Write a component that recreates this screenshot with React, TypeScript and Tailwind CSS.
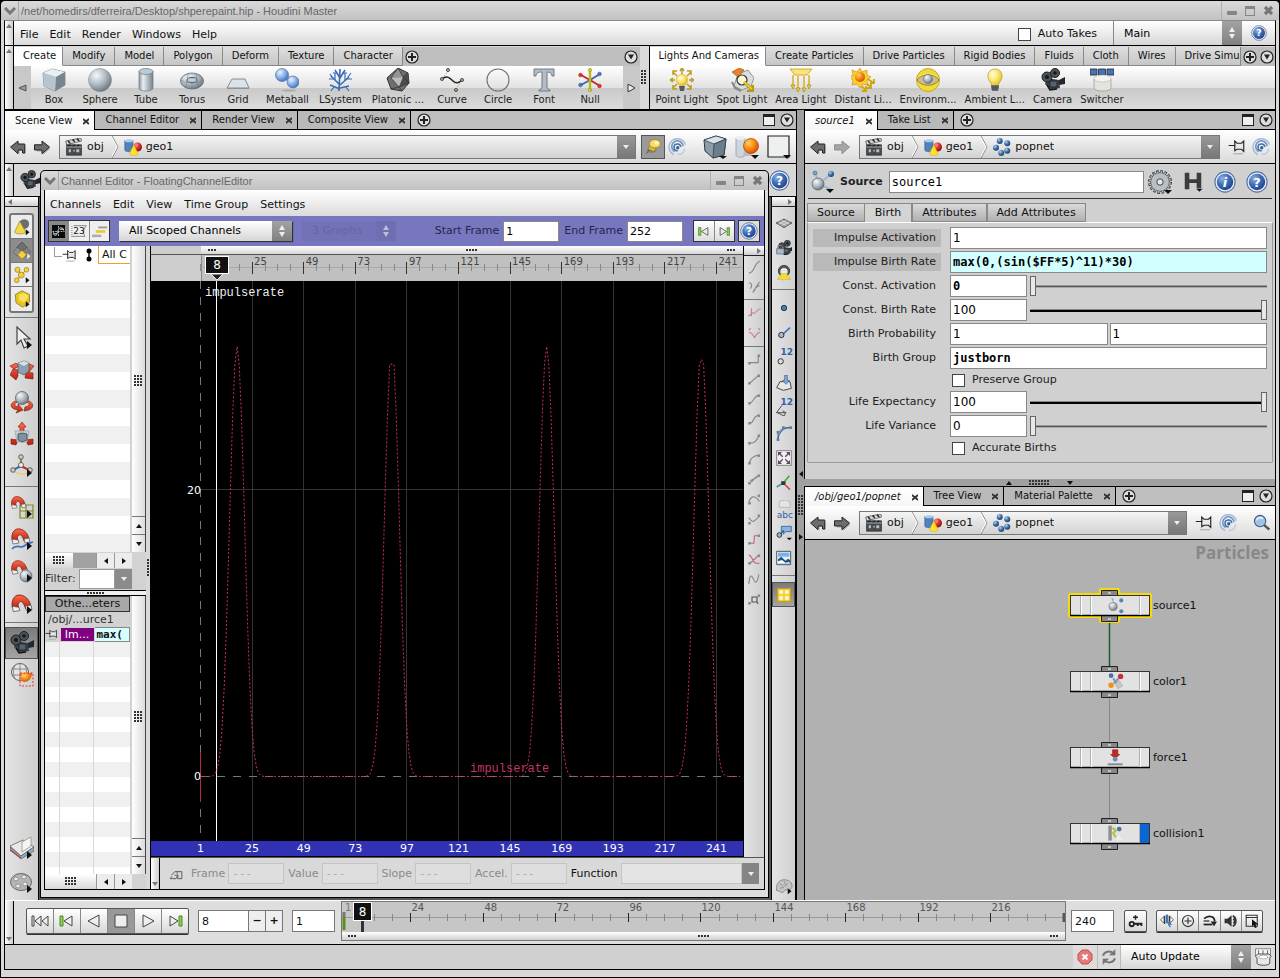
import type { ReactNode } from "react";

const dot = (x: number, y: number, r: number, fill: string, stroke = "#333") => (
  <circle cx={x} cy={y} r={r} fill={fill} stroke={stroke} strokeWidth={0.7} />
);

const corner = <path d="M17 15v8l5-4z" fill="#111" />;
const cornerDown = <path d="M16 19h8l-4 4z" fill="#111" />;
const magnet = (
  <>
    <path d="M2 13C1 5 5 1 10 2s8 5 9 10l-5 2c-1-4-3-7-5-6s-2 3-1 6z" fill="url(#red)" stroke="#7a1d0c" strokeWidth={0.8} />
    <path d="M2 12l6 1 1 3-6 1zM14 12l5-1 1 4-5 1z" fill="#eee" stroke="#555" strokeWidth={0.7} />
  </>
);
const camera = (
  <>
    <path d="M6 10l12 2 1 8-9 2-6-6z" fill="#3b4147" />
    <circle cx="6" cy="9" r="5" fill="#4a5157" stroke="#1c2023" />
    <circle cx="14" cy="5" r="4.5" fill="#4a5157" stroke="#1c2023" />
    <circle cx="6" cy="9" r="2" fill="#15181a" />
    <circle cx="14" cy="5" r="1.8" fill="#15181a" />
    <path d="M18 12l6-3v7l-6 1z" fill="#23282c" />
    <path d="M9 13h7v6H9z" fill="#59626a" stroke="#1c2023" strokeWidth={0.8} />
    <path d="M6 17l3 5 7-1" stroke="#15181a" fill="none" strokeWidth={1.5} />
  </>
);
const key = (
  <>
    <path d="M12 9V2M8 5h8" stroke="#222" strokeWidth={2.4} />
    <circle cx="6" cy="16" r="3.5" fill="none" stroke="#222" strokeWidth={3} />
    <path d="M9 14h14v5h-3v-2h-3v2h-3v-2H9" fill="#222" />
  </>
);

const ICONS: Record<string, ReactNode> = {
  box: (
    <>
      <path d="M1 5l9-4 13 3v13l-10 6L2 18z" fill="#9aabb7" stroke="#6c7780" strokeWidth={0.7} />
      <path d="M1 5l9-4 13 3-9 5z" fill="#e9eff3" />
      <path d="M14 9l9-5v13l-10 6z" fill="#77858f" />
      <path d="M1 5l13 4-1 14-11-5z" fill="#b7c5cf" />
    </>
  ),
  sphere: <circle cx="12" cy="12" r="11.5" fill="url(#steelBall)" stroke="#7d8890" strokeWidth={0.5} />,
  tube: (
    <>
      <path d="M5 3v17c0 4 14 4 14 0V3" fill="url(#steelBar)" stroke="#6e7a84" strokeWidth={0.7} />
      <ellipse cx="12" cy="3.5" rx="7" ry="3" fill="#b9cbd7" stroke="#6e7a84" strokeWidth={0.7} />
    </>
  ),
  torus: (
    <>
      <ellipse cx="12" cy="13" rx="11.5" ry="8" fill="url(#steelBall)" stroke="#5f6c77" strokeWidth={0.8} />
      <ellipse cx="12" cy="12" rx="5" ry="2.5" fill="#c4ccd3" stroke="#4a555e" />
      <path d="M1 12c5 4 17 4 22 0M8 6l-2 13M16 6l2 13M12 15v6" stroke="#74828e" strokeWidth={0.6} fill="none" />
    </>
  ),
  grid: (
    <>
      <path d="M6 11h13l4 9H1z" fill="#dbe2e8" stroke="#6b7680" strokeWidth={0.8} />
      <path d="M1 20h22v1H1z" fill="#8a949c" />
    </>
  ),
  metaball: (
    <>
      <ellipse cx="14" cy="22.5" rx="7" ry="1" fill="#aaa" />
      <path d="M8 7l10 7" stroke="#8fb3e6" strokeWidth={5} />
      <circle cx="7" cy="7" r="6.5" fill="url(#blueBall)" stroke="#4a72ab" strokeWidth={0.7} />
      <circle cx="18" cy="14" r="6" fill="url(#blueBall)" stroke="#4a72ab" strokeWidth={0.7} />
    </>
  ),
  lsystem: (
    <g stroke="#3a6cb5" fill="none" strokeWidth={1.6}>
      <path d="M11 23l1-22M12 17L3 8M12 17l9-8M12 10L7 2M12 10l5-8M12 21l-10-4M12 20l9-2" />
      <path d="M6 11H1M7 12V5M17 12V5M18 11h6M9 5H5M14 5h5M6 19l-3 4M18 19l3 4M4 9l-2-3M20 9l3-4" strokeWidth={1.2} />
    </g>
  ),
  platonic: (
    <>
      <path d="M12 0l10 5 1 10-7 8-11-2L1 10z" fill="#6d6f70" stroke="#2e3031" />
      <path d="M12 0l5 9-12 1z" fill="#939596" />
      <path d="M5 10l12-1-4 10z" fill="#b9bbbc" />
      <path d="M17 9l5-4 1 10-10 4z" fill="#4b4d4e" />
      <path d="M12 0l5 9 6 6-10 4-8-9zM13 19l3 4M13 19l-8 2M17 9l5-4" fill="none" stroke="#2e3031" strokeWidth={0.7} />
    </>
  ),
  curve: (
    <>
      <path d="M2 11L8 3M16 22l6-11" stroke="#e6b36a" strokeDasharray="2 1" />
      <path d="M2 11c5-4 8-1 11 2s6 2 9-1" stroke="#222" strokeWidth={1.5} fill="none" />
      {dot(8, 2, 1.6, "#999")}
      {dot(2, 11, 1.6, "#999")}
      {dot(16, 22, 1.6, "#999")}
      {dot(22, 12, 1.6, "#999")}
    </>
  ),
  circle: <circle cx="12" cy="12" r="11" fill="none" stroke="#6b7177" strokeWidth={1.1} />,
  font: (
    <path d="M2 1h20v7h-2c0-3-2-4-5-4v15c0 2 1 2 3 3v1H7v-1c2-1 3-1 3-3V4C6 4 4 5 4 8H2z" fill="#b3bdc8" stroke="#66717c" strokeWidth={0.9} />
  ),
  null: (
    <>
      <path d="M12 12L3 17M12 12l10-6" stroke="#3f66a5" strokeWidth={2} />
      <path d="M12 12L3 7M12 12l10 6" stroke="#c62828" strokeWidth={2} />
      <path d="M12 1v22" stroke="#b6ba1d" strokeWidth={2.4} />
      {dot(2.5, 7, 1.8, "#d33", "#c62828")}
      {dot(21.5, 18, 1.8, "#d33", "#c62828")}
      {dot(2.5, 17, 1.8, "#4f77b5", "#3f66a5")}
      {dot(21.5, 6, 1.8, "#4f77b5", "#3f66a5")}
      {dot(12, 2, 1.6, "#d2d52f", "#999c18")}
      {dot(12, 22, 1.6, "#d2d52f", "#999c18")}
    </>
  ),
  pointLight: (
    <>
      <g stroke="#b79a12" strokeWidth={1.4} fill="none">
        <path d="M12 6V1M7 8L3 4M17 8l4-4M5 12H0M19 12h5M7 16l-4 4M17 16l4 4" />
        <path d="M10 3l2-3 2 3M3 7V3h4M17 3h4v4M3 10l-3 2 3 2M21 10l3 2-3 2M3 17v4h4M17 21h4v-4" />
      </g>
      <circle cx="12" cy="12" r="5.5" fill="url(#yellowBall)" stroke="#c9a619" strokeWidth={0.6} />
      <path d="M9 18h6l-1 5h-4z" fill="#555b60" />
    </>
  ),
  spotLight: (
    <>
      <path d="M8 6l10-4 6 8-3 8-9 4-8-4z" fill="#d9dde0" stroke="#7b8084" strokeWidth={0.8} />
      <path d="M2 4l7-4 5 2-6 7z" fill="#e8822a" stroke="#8d4b12" strokeWidth={0.6} />
      <circle cx="12" cy="12" r="5" fill="#fff6d2" stroke="#333" strokeWidth={1.2} />
      <path d="M14 14l8 7M23 17v6h-6" stroke="#b79a12" strokeWidth={3} fill="none" />
      <path d="M14 14l8 7" stroke="#f2d43c" strokeWidth={1.5} />
      <path d="M2 14l3 6 6 3" stroke="#888" fill="none" strokeWidth={2} />
    </>
  ),
  areaLight: (
    <>
      <path d="M1 1h22l-5 6H6z" fill="#fae37b" stroke="#c49d17" strokeWidth={0.8} />
      <path d="M4 7v11M9 8v14M15 8v14M20 7v11" stroke="#d5b322" strokeWidth={1.5} />
      <path d="M2 17h4l-2 4zM7 20h4l-2 4zM13 20h4l-2 4zM18 17h4l-2 4z" fill="#f2d43c" stroke="#a8880d" strokeWidth={0.7} />
    </>
  ),
  distantLight: (
    <>
      <path d="M15 10l8 5M13 14l7 5M9 17l6 5M23 11v4h-4M20 15v5h-4M15 18v5h-4" stroke="#c9a713" strokeWidth={1.8} fill="none" />
      <path d="M9 0l2 4 5-2v5l4 2-4 3 1 5-5-1-3 4-3-4-5 1 1-5-4-3 4-2-1-5 5 2z" fill="#f8cf2e" stroke="#c9860c" strokeWidth={0.6} />
      <circle cx="9" cy="9" r="5" fill="url(#orangeBall)" />
    </>
  ),
  environment: (
    <>
      <circle cx="12" cy="12" r="11.5" fill="#f3d936" stroke="#b89c17" strokeWidth={0.8} />
      <path d="M2 11c3-7 17-7 20 0-4-3-16-3-20 0z" fill="#fff4a6" />
      <path d="M1 12c5-7 17-7 22 0-5 7-17 7-22 0z" fill="#c9c08e" stroke="#84712a" strokeWidth={0.8} />
      <circle cx="12" cy="11" r="4.5" fill="url(#steelBall)" stroke="#5a646d" strokeWidth={0.6} />
    </>
  ),
  ambient: (
    <>
      <path d="M8 15C3 10 4 1 12 1s9 9 4 14l-1 3H9z" fill="url(#yellowBall)" stroke="#b7a142" strokeWidth={0.8} />
      <path d="M8 17h8l-1 6H9z" fill="#6c7277" />
      <path d="M8 19h8M8.5 21h7" stroke="#333" strokeWidth={0.8} />
    </>
  ),
  camera,
  switcher: (
    <>
      <path d="M0 1h7v6H0zM8.500 1h7v6h-7zM17 1h7v6h-7z" fill="#4773b3" stroke="#27374d" strokeWidth={0.9} />
      <path d="M4 11v9c0 4 17 4 17 0v-9" fill="#e4e4de" stroke="#98988f" strokeWidth={0.7} />
      <ellipse cx="12.5" cy="10.5" rx="8.5" ry="3.5" fill="#f5f5f0" stroke="#b3b3aa" strokeWidth={0.6} />
    </>
  ),
  back: (
    <>
      <path d="M5 14l9-8v4h8v11h-3v-4h-5v4z" fill="#aaa" />
      <path d="M2 12l10-8v4h9v12h-3v-4h-6v5z" fill="#6b6e6b" stroke="#222" strokeWidth={1.3} />
    </>
  ),
  forward: (
    <>
      <path d="M23 14l-9-8v4H5v8h9v4z" fill="#aaa" />
      <path d="M22 12L12 4v5H2v7h10v5z" fill="#6b6e6b" stroke="#222" strokeWidth={1.3} />
    </>
  ),
  forwardOff: <path d="M22 12L12 4v5H2v7h10v5z" fill="#a5a5a5" stroke="#888" strokeWidth={1.2} />,
  clapper: (
    <>
      <path d="M2 9h20v14H2z" fill="#454b4e" stroke="#222" strokeWidth={0.8} />
      <path d="M1 4l20-4 1 4L2 9z" fill="#ddd" stroke="#222" strokeWidth={0.8} />
      <path d="M4 4l3 3M10 2l3 3M16 1l3 3M4 12l3-3M10 12l3-3M16 12l3-3" stroke="#222" strokeWidth={2} />
      <path d="M2 12h20" stroke="#ccc" />
      <path d="M5 15h3v4H5zM11 16h2v2h-2zM15 15h4v4h-4z" fill="#b7bcc0" />
    </>
  ),
  geo: (
    <>
      <path d="M1 3v13c0 3 11 3 11 0V3" fill="#4e82bf" stroke="#2e5585" strokeWidth={0.7} />
      <ellipse cx="6.5" cy="3.5" rx="5.5" ry="2" fill="#a9cbe9" />
      <circle cx="18" cy="12" r="6" fill="url(#redBall)" />
      <path d="M13 9l6 12c-2 3-10 3-12 0z" fill="#ffe02e" stroke="#c89f12" strokeWidth={0.6} />
    </>
  ),
  popnet: (
    <g fill="url(#navyBall)">
      <circle cx="9" cy="4" r="4" />
      <circle cx="19" cy="7" r="4" />
      <circle cx="4" cy="13" r="4" />
      <circle cx="11" cy="20" r="4" />
      <circle cx="19" cy="17" r="4" />
    </g>
  ),
  pinYellow: (
    <>
      <ellipse cx="9" cy="18" rx="7" ry="3" fill="#777" opacity={0.6} />
      <path d="M8 8l8 8-4 3-8-3z" fill="#d9b531" stroke="#7f6611" strokeWidth={0.8} />
      <ellipse cx="14" cy="8" rx="8" ry="6" fill="#f4dc69" stroke="#8b7115" strokeWidth={0.9} />
      <ellipse cx="16" cy="7" rx="3" ry="2.5" fill="#fff5bd" />
      <path d="M6 17l-4 5" stroke="#555" strokeWidth={1.4} />
    </>
  ),
  rings: (
    <g fill="none" strokeWidth={2}>
      <path d="M8 22A11 11 0 1 1 23 9" stroke="#a3bad8" />
      <path d="M9 18A7.500 7.500 0 1 1 20 11" stroke="#6f93c3" />
      <path d="M13 17a4.500 4.500 0 1 1 4-5" stroke="#416fae" />
      <circle cx="13" cy="13" r="2.2" fill="#2d5fa5" stroke="none" />
      <path d="M13 22c6 0 9-4 9-8" stroke="#b9c9de" />
    </g>
  ),
  cube: (
    <>
      <path d="M1 5l12-4 10 3-2 16-11 3-8-7z" fill="#8b9dab" stroke="#2d363d" />
      <path d="M1 5l12-4 10 3-12 5z" fill="#d9e2e8" stroke="#2d363d" strokeWidth={0.7} />
      <path d="M11 9l12-5-2 16-11 3z" fill="#6d7e8b" stroke="#2d363d" strokeWidth={0.7} />
      <path d="M16 21h8l-4 3z" fill="#111" />
    </>
  ),
  display: (
    <>
      <path d="M1 3v17c0 3 9 3 9 0V3" fill="#ccd6de" stroke="#8a949d" strokeWidth={0.7} />
      <ellipse cx="5.5" cy="3" rx="4.5" ry="2" fill="#e9eff3" />
      <path d="M12 4l5 17H8z" fill="#b8bcc0" />
      <circle cx="16" cy="11" r="7.5" fill="url(#orangeBall)" stroke="#b34a05" strokeWidth={0.8} />
      <path d="M16 20h8l-4 4z" fill="#111" />
    </>
  ),
  square: (
    <>
      <path d="M1 1h21v21H1z" fill="#eef0ef" stroke="#222" strokeWidth={1.2} />
      <path d="M16 20h8l-4 4z" fill="#111" />
    </>
  ),
  pin: (
    <>
      <path d="M1 10h9M9 4v13l3-2h6l3 3V4l-3 3h-6l-3-3z" fill="#e9e9e9" stroke="#222" strokeWidth={1.5} />
      <path d="M7 21h13" stroke="#aaa" strokeWidth={1.5} />
    </>
  ),
  search: (
    <>
      <path d="M15 15l8 7" stroke="#555" strokeWidth={3.5} />
      <circle cx="10" cy="10" r="8" fill="#9cc3ea" stroke="#4a5d77" strokeWidth={1.6} />
      <path d="M5 9c1-4 6-5 9-2" stroke="#e8f3fd" strokeWidth={2} fill="none" />
    </>
  ),
  source: (
    <>
      <path d="M8 14L4 2M8 14L20 4M8 14l13 6" stroke="#9db9d4" strokeWidth={2} />
      <circle cx="7" cy="14" r="6" fill="url(#steelBall)" stroke="#4f5a64" strokeWidth={0.7} />
      <circle cx="20" cy="4" r="3" fill="url(#navyBall)" />
      <circle cx="4" cy="3" r="2" fill="#7aa3cc" stroke="#41658a" strokeWidth={0.6} />
      <path d="M15 19h8l-4 4z" fill="#111" />
    </>
  ),
  gear: (
    <>
      <circle cx="12" cy="12" r="10" fill="none" stroke="#3c4247" strokeWidth={4} strokeDasharray="2.4 1.527" />
      <circle cx="12" cy="12" r="9.4" fill="#b8c0c6" stroke="#4d555b" />
      <circle cx="12" cy="12" r="10" fill="none" stroke="#b8c0c6" strokeWidth={2} strokeDasharray="1.2 2.727" strokeDashoffset={-0.6} />
      <circle cx="12" cy="12" r="3.2" fill="#e3e7ea" stroke="#444" />
      <path d="M16 20h8l-4 4z" fill="#111" />
    </>
  ),
  hda: (
    <>
      <path d="M3 2h5v7h8V2h5v18h-5v-7H8v7H3z" fill="#3a3c3e" />
      <path d="M15 19h8l-4 4z" fill="#111" stroke="#ddd" strokeWidth={0.6} />
    </>
  ),
  shapes: (
    <>
      <circle cx="15" cy="8" r="6.5" fill="#6a6e72" />
      <path d="M9 4l8 15c-3 3-12 3-15 0z" fill="#f6d74a" stroke="#927513" strokeWidth={0.8} />
      {corner}
    </>
  ),
  diamonds: (
    <>
      <path d="M12 0l7 7-7 7-7-7z" fill="#6f6f6f" stroke="#333" strokeWidth={0.7} />
      <path d="M6 7l6 6-6 6-6-6z" fill="#8f8f8f" stroke="#444" strokeWidth={0.6} />
      <path d="M18 7l6 6-6 6-6-6z" fill="#7f7f7f" stroke="#444" strokeWidth={0.6} />
      <path d="M12 11l6 6-6 6-6-6z" fill="#f6cf3d" stroke="#8a6c0d" strokeWidth={0.8} />
      <path d="M19 15v8l4-4z" fill="#eee" />
    </>
  ),
  particles: (
    <>
      <path d="M6 5l5 7M18 5l-7 7M5 19l6-7" stroke="#8b7113" />
      <g fill="#f2d03a" stroke="#8b7113" strokeWidth={0.8}>
        <circle cx="6" cy="5" r="3.5" />
        <circle cx="18" cy="5" r="3.2" />
        <circle cx="11" cy="12" r="4" />
        <circle cx="5" cy="19" r="3.2" />
      </g>
      {corner}
    </>
  ),
  solid: (
    <>
      <path d="M3 6l9-5 10 5v10l-9 7-9-6z" fill="#e8c421" stroke="#7f670c" strokeWidth={0.9} />
      <path d="M8 6l7-2 6 4-6 9-7-4z" fill="#f8e25e" />
      {corner}
    </>
  ),
  arrow: (
    <>
      <path d="M7 1v17l4-4 3 8 4-2-4-7h6z" fill="#eee" stroke="#444" strokeWidth={1.2} />
      {corner}
    </>
  ),
  move: (
    <>
      <path d="M0 17l3-6 5 1v6l-2 4zM24 8l-7-3-2 5 4 4zM0 8l6-3 3 3-5 3zM23 21l-8-1 1-6 7 1z" fill="url(#red)" stroke="#7b130b" strokeWidth={0.6} />
      <path d="M8 5l6-2 5 2v8l-5 4-6-3z" fill="#8ca0ae" stroke="#4e5d68" strokeWidth={0.8} />
      <path d="M8 5l6-2 5 2-5 3z" fill="#d5dfe6" />
    </>
  ),
  rotate: (
    <>
      <path d="M5 11c-6 3-5 8 3 9l-2 3 7-3-5-6v3c-4-1-4-3-1-5zM19 11c6 3 5 9-5 10l1-4c5-1 5-3 2-5z" fill="url(#red)" stroke="#7b2a0b" strokeWidth={0.7} />
      <circle cx="12" cy="8" r="6.5" fill="url(#steelBall)" stroke="#56616a" strokeWidth={0.8} />
    </>
  ),
  scale: (
    <>
      <path d="M12 0l4 5h-2v5h-4V5H8zM1 17l7 1-2 5-5-1zM23 17l-7 1 2 5 5-1z" fill="url(#red)" stroke="#7b130b" strokeWidth={0.6} />
      <path d="M5 9h14l-2 11H7z" fill="#c6ced4" stroke="#9aa3aa" strokeWidth={0.7} />
      <path d="M8 12l4-1 5 1v6l-5 2-4-2z" fill="#7f919f" stroke="#3e4a53" strokeWidth={0.8} />
    </>
  ),
  handle: (
    <>
      <path d="M11 12V4" stroke="#6d9f2f" strokeWidth={2} />
      <path d="M11 12l-8 4" stroke="#4470b5" strokeWidth={2} />
      <path d="M11 12l10 5" stroke="#c7301e" strokeWidth={2} />
      <path d="M3 17c6 4 12 4 18 0" stroke="#e8ce50" strokeWidth={1.5} fill="none" />
      {dot(11, 3, 2.3, "#ccc")}
      {dot(3, 16, 2.3, "#ccc")}
      {dot(20, 16, 2.3, "#ccc")}
      {dot(11, 11, 2.5, "#eee")}
      {corner}
    </>
  ),
  snapGrid: (
    <>
      <path d="M10 10h13v13H10zM16 10v13M10 16h13" fill="none" stroke="#7d8a1c" strokeWidth={1.2} />
      <g transform="scale(.8)">{magnet}</g>
      {corner}
    </>
  ),
  snapCurve: (
    <>
      {magnet}
      <path d="M2 22c5-6 8 0 12-3s6-3 9-4" stroke="#3c74b9" strokeWidth={1.8} fill="none" />
      {corner}
    </>
  ),
  snapPoint: (
    <>
      <g transform="scale(.9)">{magnet}</g>
      <circle cx="16" cy="17" r="6" fill="url(#steelBall)" stroke="#666" strokeWidth={0.7} />
      {corner}
    </>
  ),
  snap: (
    <>
      <g transform="translate(0 2) scale(1.1)">{magnet}</g>
      {corner}
    </>
  ),
  renderRegion: (
    <>
      <circle cx="10" cy="9" r="8.5" fill="#e4e4e4" stroke="#555" strokeWidth={0.9} />
      <path d="M2 6h16M2 12h16M10 0v18M5 2c-2 5-2 9 0 14M15 2c2 5 2 9 0 14" stroke="#777" strokeWidth={0.8} fill="none" />
      <path d="M10 10h12c0 6-4 9-8 9-3-1-4-4-4-9z" fill="url(#orangeBall)" />
      <path d="M10 10h13v13H10z" fill="none" stroke="#d33" strokeDasharray="2 1.5" />
    </>
  ),
  book: (
    <>
      <path d="M0 10l13-6 11 7-13 9z" fill="#e8e8e4" stroke="#666" strokeWidth={0.8} />
      <path d="M0 11l11 9 13-9v4l-13 8L1 14z" fill="#8fb0c4" stroke="#556" strokeWidth={0.7} />
      <path d="M12 6l9-5v9l-9 6z" fill="#f5f5f2" stroke="#888" strokeWidth={0.7} />
      <path d="M0 14l11 8" stroke="#b3402e" strokeWidth={1.4} />
      {corner}
    </>
  ),
  reel: (
    <>
      <ellipse cx="11" cy="12" rx="10.5" ry="8.5" fill="#b5b5b3" stroke="#666" />
      <g fill="#eee" stroke="#777" strokeWidth={0.7}>
        <ellipse cx="6" cy="9" rx="2.3" ry="1.9" />
        <ellipse cx="14" cy="7" rx="2.3" ry="1.9" />
        <ellipse cx="8" cy="16" rx="2.3" ry="1.9" />
        <ellipse cx="15" cy="14" rx="2.3" ry="1.9" />
      </g>
      {corner}
    </>
  ),
  plane: (
    <>
      <path d="M0 12l12-6 12 6-12 7z" fill="#999" stroke="#333" />
      <path d="M4 10l12 6M8 8l12 6M4 14l12-6M8 16l12-6" stroke="#eee" />
    </>
  ),
  cameraLock: (
    <>
      <g transform="translate(3 0)">{camera}</g>
      <path d="M3 13v-2c0-4 7-4 7 0v2" fill="none" stroke="#777" strokeWidth={2} />
      <path d="M1 13h11v8H1z" fill="#a9bbcb" stroke="#51606e" />
    </>
  ),
  headlight: (
    <>
      <circle cx="12" cy="9" r="8.5" fill="#54585b" stroke="#222" />
      <circle cx="12" cy="10" r="5.5" fill="#e8e8e4" />
      <path d="M8 13h8l6 9-6-1-4 2-4-2-6 1z" fill="#f4db35" stroke="#c7a512" strokeWidth={0.7} />
    </>
  ),
  point: <circle cx="12" cy="12" r="4" fill="#4f7cab" stroke="#22384f" strokeWidth={1.5} />,
  normals: (
    <>
      <path d="M9 15L21 4" stroke="#3a72ba" strokeWidth={2.5} />
      <circle cx="8" cy="15" r="4" fill="#a8bccd" stroke="#333" strokeWidth={1.5} />
    </>
  ),
  pointNumbers: <circle cx="7" cy="17" r="4" fill="#ddd" stroke="#333" strokeWidth={1.5} />,
  primNormal: (
    <>
      <path d="M6 10l15 0 2 10-12 3-10-4z" fill="#e8e8e8" stroke="#333" strokeWidth={1.3} />
      <path d="M13 0h4v8h3l-5 6-5-6h3z" fill="#88a9cf" stroke="#315f99" />
    </>
  ),
  primNumbers: <path d="M0 20L9 8M2 19h12l-4-3M2 19l10 5 3-6" fill="none" stroke="#444" strokeWidth={1.4} />,
  hull: (
    <>
      <path d="M3 22C3 12 10 4 22 4" stroke="#4a76ad" strokeWidth={2} fill="none" />
      <path d="M3 22V11l8-7h11" stroke="#444" fill="none" />
      <path d="M1 9h4v4H1zM9 2h4v4H9zM20 2h4v4h-4zM1 20h4v4H1z" fill="#5d7fa8" />
    </>
  ),
  expand: (
    <>
      <path d="M1 1h22v22H1z" fill="#f2eef2" stroke="#555" />
      <path d="M3 3h6L3 9zM21 3v6l-6-6zM3 21v-6l6 6zM21 21h-6l6-6z" fill="#5c4566" />
      <path d="M5 5l5 5M19 5l-5 5M5 19l5-5M19 19l-5-5" stroke="#5c4566" strokeWidth={2} />
    </>
  ),
  axes: (
    <>
      <path d="M11 12L1 18" stroke="#3f9bb5" strokeWidth={2.5} />
      <path d="M11 12l9-11" stroke="#4cab35" strokeWidth={2.5} />
      <path d="M11 12l10 10" stroke="#e0434f" strokeWidth={2.5} />
      <path d="M8 9l7 1-2 5-5 0z" fill="#333" />
    </>
  ),
  labels: <path d="M5 2l9-2 7 3v8H5z" fill="#e6e4dc" stroke="#aaa" />,
  comment: (
    <>
      <path d="M8 2h15v8H14l-3 4v-4H8z" fill="#88b4e2" stroke="#2e6094" strokeWidth={1.2} />
      <circle cx="5" cy="15" r="3.5" fill="#9fb3c6" stroke="#333" strokeWidth={1.4} />
      <path d="M7 13l5-5" stroke="#2e6094" strokeWidth={2} />
      {cornerDown}
    </>
  ),
  image: (
    <>
      <path d="M1 2h21v20H1z" fill="#e4eefa" stroke="#345" strokeWidth={1.3} />
      <path d="M3 4h17v6H3z" fill="#7fb0e6" />
      <path d="M3 20v-6l5-4 6 6 4-3 3 2v5z" fill="#23517e" />
      <path d="M3 20v-3l6-2 5 4 6-1v2z" fill="#fff" />
    </>
  ),
  quad: (
    <>
      <path d="M0 0h24v24H0z" fill="#d89c12" />
      <path d="M3 3h8v8H3zM13 3h8v8h-8zM3 13h8v8H3zM13 13h8v8h-8z" fill="#fffbe0" stroke="#f5d43a" strokeWidth={2} />
    </>
  ),
  brain: (
    <>
      <path d="M2 14C2 6 10 1 18 5c6 3 6 9 2 12l-6 0-4 4-4-2-4-1z" fill="#c5c5c5" stroke="#777" />
      <path d="M6 9l5 3M12 5l2 6M17 8l-4 5M6 15l6-1" stroke="#888" fill="none" />
      {corner}
    </>
  ),
  graphView: (
    <>
      <path d="M0 0h24v24H0z" fill="#0a0a0a" />
      <path d="M1 12h22M12 2v20" stroke="#eee" strokeWidth={1.5} strokeDasharray="3 2" />
      <path d="M2 13c3 9 6 8 8 0s8-12 12-3" stroke="#68a0e0" strokeWidth={2} fill="none" />
      <path d="M2 16h8M15 8h7" stroke="#e7c93a" strokeWidth={2} />
    </>
  ),
  dopesheet: (
    <>
      <path d="M1 20h20c-4-5-2-12 2-16H4" fill="#f2f2f2" stroke="#888" strokeWidth={1.5} />
      <path d="M1 5v18" stroke="#999" strokeWidth={3} strokeDasharray="1 2" />
    </>
  ),
  bars: (
    <>
      <path d="M10 4h14v3H10z" fill="#999" />
      <path d="M6 10h15v4H6z" fill="#efc51e" />
      <path d="M0 17h15v4H0z" fill="#aaa" />
    </>
  ),
  scrub: (
    <>
      <path d="M1 10l6-6v12zM23 10l-6-6v12z" fill="#fff" stroke="#333" strokeWidth={1.3} />
      <path d="M8 3v14M16 3v11" stroke="#333" strokeWidth={2} />
      <path d="M10 1h4v15h-4z" fill="#3f74b8" />
      <path d="M14 13l7 5-4 1 2 4-3-1-2-3z" fill="#3f74b8" />
    </>
  ),
  clock: (
    <>
      <circle cx="12" cy="12" r="9.5" fill="none" stroke="#333" strokeWidth={2} />
      <path d="M12 6v11M6 12h12" stroke="#333" strokeWidth={2} fill="none" />
    </>
  ),
  loop: (
    <>
      <path d="M2 8c3-3 6-4 9-4 6 0 9 4 9 9" fill="none" stroke="#222" strokeWidth={3} />
      <path d="M13 13h11l-5 8z" fill="#222" />
      <path d="M1 18h15" stroke="#222" strokeWidth={3} />
      <path d="M1 12h10" stroke="#222" strokeWidth={2} fill="none" />
    </>
  ),
  speaker: (
    <>
      <path d="M1 8h5l7-6v20l-7-6H1z" fill="#333" />
      <path d="M15 3c7 3 7 15 0 18M16 8c3 2 3 6 0 8" fill="none" stroke="#333" strokeWidth={3} />
    </>
  ),
  panel: (
    <>
      <path d="M2 2h19v19H2zM2 6h19" fill="none" stroke="#333" strokeWidth={1.8} />
      <path d="M12 9v13l3-3 2 5 3-1-2-5h5z" fill="#111" />
    </>
  ),
  key,
  refresh: (
    <g fill="none" stroke="#777" strokeWidth={3}>
      <path d="M3 10c2-7 11-8 16-3" />
      <path d="M21 14c-2 7-11 8-16 3" />
      <path d="M21 1v8h-8zM3 23v-8h8z" fill="#777" strokeWidth={1} />
    </g>
  ),
  cache: (
    <>
      <path d="M2 1h20v10H2z" fill="#f5f5f0" stroke="#666" />
      <path d="M6 3v5M12 3v5M18 3v5" stroke="#777" strokeWidth={1.5} />
      <path d="M4 13v7c0 4 17 4 17 0v-7l2-2-3-3H5l-3 3z" fill="#e9e9e2" stroke="#444" strokeWidth={1.2} />
      <ellipse cx="12.5" cy="12" rx="6" ry="2.5" fill="#fff" stroke="#888" strokeWidth={0.8} />
    </>
  ),
  editKey: (
    <>
      <path d="M4 14l6-6h12v12h-7v-6l-3 6H2l3-4" fill="none" stroke="#555" strokeWidth={1.6} />
      <path d="M14 8v5M9 14h7" stroke="#555" strokeWidth={1.3} />
    </>
  ),
  nodeSource: (
    <>
      <circle cx="9" cy="14" r="6" fill="url(#steelBall)" stroke="#667" strokeWidth={0.8} />
      <circle cx="21" cy="5" r="3" fill="#5a83b3" />
      <circle cx="21" cy="21" r="3" fill="#5a83b3" />
      <path d="M6 1l4 2-1 5z" fill="#86aac9" />
    </>
  ),
  nodeColor: (
    <>
      <circle cx="6" cy="4" r="3.5" fill="#4a72a8" />
      <circle cx="20" cy="5" r="4" fill="#cc2f35" />
      <circle cx="6" cy="18" r="4" fill="#ef8f1c" />
      <path d="M9 8l6 8M17 8l-7 7" stroke="#7b99c7" strokeWidth={3} />
      <path d="M12 16l6-5 5 8-7 4z" fill="#ccc8c0" stroke="#999" strokeWidth={0.7} />
    </>
  ),
  nodeForce: (
    <>
      <path d="M8 1h8v7h3l-7 6-7-6h3z" fill="#c3261f" stroke="#7a120e" strokeWidth={0.7} />
      <circle cx="12" cy="15" r="3.5" fill="#6690c0" />
      <path d="M1 21h22v3H1z" fill="#8b8f92" />
    </>
  ),
  nodeCollision: (
    <>
      <path d="M2 1h5v22H2z" fill="#8d9092" />
      <circle cx="18" cy="6" r="3.5" fill="#4a72a8" />
      <path d="M8 4l5 4-4 4 4 6" stroke="#b5c336" strokeWidth={3} fill="none" />
      <path d="M12 22l5-8 6 8z" fill="#eee" />
    </>
  ),
};

function Icon({ name, size = 24 }: { name: string; size?: number }) {
  return (
    <svg width={size} height={size} viewBox="0 0 24 24" className="shrink-0" aria-hidden="true">
      {ICONS[name]}
    </svg>
  );
}

function Defs() {
  const ball = (id: string, a: string, b: string, c: string) => (
    <radialGradient id={id} cx="35%" cy="30%" r="75%">
      <stop offset="0" stopColor={a} />
      <stop offset=".5" stopColor={b} />
      <stop offset="1" stopColor={c} />
    </radialGradient>
  );
  return (
    <svg className="absolute size-0" aria-hidden="true">
      <defs>
        {ball("steelBall", "#f6f8f9", "#b4bec6", "#68747e")}
        {ball("blueBall", "#eaf3fe", "#8fb5ea", "#3e6fb8")}
        {ball("navyBall", "#b9d4ee", "#3f6ea6", "#1c3f6b")}
        {ball("redBall", "#ff9c85", "#d9302a", "#86120e")}
        {ball("orangeBall", "#ffd56b", "#f98b12", "#cf4c06")}
        {ball("yellowBall", "#fffde0", "#fbe86a", "#e0b91f")}
        {ball("helpBall", "#8fb4e8", "#3f6fb8", "#1d438a")}
        <linearGradient id="steelBar">
          <stop offset="0" stopColor="#8a99a5" />
          <stop offset=".3" stopColor="#e8eef2" />
          <stop offset="1" stopColor="#73818d" />
        </linearGradient>
        <linearGradient id="red" x1="0" y1="0" x2="0" y2="1">
          <stop offset="0" stopColor="#ff6b4a" />
          <stop offset="1" stopColor="#b81f12" />
        </linearGradient>
      </defs>
    </svg>
  );
}

function HelpButton({ size = 22, glyph = "?", label = "Help" }: { size?: number; glyph?: string; label?: string }) {
  return (
    <button aria-label={label} className="shrink-0">
      <svg width={size} height={size} viewBox="0 0 24 24" className="block">
        <circle cx="12" cy="12" r="11" fill="#f1f1f1" stroke="#5473a5" strokeWidth={1.2} />
        <circle cx="12" cy="12" r="9" fill="url(#helpBall)" />
        <text x="12" y="17" textAnchor="middle" fontSize="14" fontWeight="bold" fill="#fff" fontStyle={glyph === "i" ? "italic" : "normal"}>
          {glyph}
        </text>
      </svg>
    </button>
  );
}

function Grip({ cols, rows }: { cols: number; rows: number }) {
  return (
    <svg width={cols * 3} height={rows * 3} className="shrink-0" aria-hidden="true">
      {Array.from({ length: cols * rows }, (_, i) => (
        <rect key={i} x={(i % cols) * 3} y={Math.floor(i / cols) * 3} width="2" height="2" fill="#333" />
      ))}
    </svg>
  );
}

const TRI = {
  up: "M0 5h6L3 1z",
  down: "M0 1h6L3 5z",
  left: "M5 0v6L1 3z",
  right: "M1 0v6l4-3z",
};

function Tri({ dir, color = "#111" }: { dir: keyof typeof TRI; color?: string }) {
  return (
    <svg width="6" height="6" className="shrink-0" aria-hidden="true">
      <path d={TRI[dir]} fill={color} />
    </svg>
  );
}

function Gutter({ down = false }: { down?: boolean }) {
  return (
    <div className={`flex w-[9px] shrink-0 justify-center border-r border-black bg-linear-to-r from-white to-[#cfcfcf] py-[2px] ${down ? "items-end" : "items-start"}`}>
      <Tri dir={down ? "down" : "up"} color="#777" />
    </div>
  );
}

function Collapser({ left = false }: { left?: boolean }) {
  return (
    <div className={`flex h-[10px] shrink-0 items-center border-b border-[#222] bg-linear-to-b from-white to-[#d0d0d0] px-[2px] ${left ? "justify-start" : "justify-end"}`}>
      <Tri dir={left ? "left" : "right"} color="#777" />
    </div>
  );
}

function RoundButton({ kind }: { kind: "plus" | "menu" }) {
  return (
    <button aria-label={kind === "plus" ? "Add tab" : "Tab menu"} className="shrink-0">
      <svg width="14" height="14" viewBox="0 0 14 14" className="block">
        <circle cx="7" cy="7" r="6" fill="#dedede" stroke="#222" strokeWidth={1.2} />
        {kind === "plus" ? <path d="M7 3v8M3 7h8" stroke="#222" strokeWidth={2} /> : <path d="M4 4.500h6l-3 5z" fill="#222" />}
      </svg>
    </button>
  );
}

function MaxButton() {
  return (
    <button aria-label="Maximize pane" className="h-[12px] w-[12px] shrink-0 border border-t-[3px] border-[#222] bg-[#eee]" />
  );
}

function Spinner() {
  return (
    <svg width="6" height="12" viewBox="0 0 6 12" aria-hidden="true">
      <path d="M0 5h6L3 0zM0 7h6l-3 5z" fill="#eee" />
    </svg>
  );
}

function Select({ label, value, options, className }: { label: string; value: string; options: string[]; className: string }) {
  return (
    <div className={`relative flex ${className}`}>
      <select aria-label={label} defaultValue={value} className="min-w-0 flex-1 appearance-none bg-linear-to-b from-white to-[#d6d6d6] pl-[10px] text-[11px] text-black">
        {options.map((o) => (
          <option key={o}>{o}</option>
        ))}
      </select>
      <span className="pointer-events-none flex w-5 items-center justify-center bg-linear-to-b from-[#a3a3a3] to-[#808080]">
        <Spinner />
      </span>
    </div>
  );
}

function PaneTabs({ tabs }: { tabs: { name: string; italic?: boolean }[] }) {
  return (
    <div className="flex h-[20px] shrink-0 border-t border-black bg-[#bebebe]">
      {tabs.map((t, i) => (
        <div
          key={t.name}
          className={`flex shrink-0 items-center gap-[11px] border-r border-black pr-[5px] pl-[10px] ${i === 0 ? "bg-linear-to-b from-white to-[#f6f6f6]" : "border-b bg-[#b9b9b9]"}`}
        >
          <button className={`text-[10px] leading-3 whitespace-nowrap ${t.italic ? "italic" : ""}`}>{t.name}</button>
          <button aria-label={`Close ${t.name}`}>
            <svg width="6" height="7" viewBox="0 0 6 7" className="mt-px block">
              <path d="M0 1l6 5M6 1L0 6" stroke="#333" strokeWidth={1.8} />
            </svg>
          </button>
        </div>
      ))}
      <div className="flex flex-1 items-center gap-[5px] border-b border-black pr-[2px] pl-[6px]">
        <RoundButton kind="plus" />
        <span className="flex-1" />
        <MaxButton />
        <RoundButton kind="menu" />
      </div>
    </div>
  );
}

const CRUMB_ICONS: Record<string, string> = { obj: "clapper", geo1: "geo", popnet: "popnet" };

function Chevron() {
  return (
    <svg width="7" height="22" viewBox="0 0 7 22" className="ml-[8px]" aria-hidden="true">
      <path d="M0 0l6 11-6 11" fill="none" stroke="#888" />
      <path d="M-1 0l6 11-6 11" fill="none" stroke="#fff" />
    </svg>
  );
}

function PathBar({ path, forward = true, children }: { path: string[]; forward?: boolean; children: ReactNode }) {
  return (
    <div className="flex h-[34px] shrink-0 items-center border-b border-black bg-linear-to-b from-white to-[#dadada] pr-[5px] pl-[4px]">
      <button aria-label="Back">
        <Icon name="back" size={18} />
      </button>
      <button aria-label="Forward" className="ml-[6px]">
        <Icon name={forward ? "forward" : "forwardOff"} size={18} />
      </button>
      <nav className="ml-[8px] flex h-[24px] min-w-0 flex-1 border border-[#777] bg-linear-to-b from-[#f4f4f4] to-[#d2d2d2]">
        {path.map((p, i) => (
          <div key={p} className="flex items-center">
            <button className="flex items-center gap-[4px] pl-[5px] text-[11px]">
              <Icon name={CRUMB_ICONS[p]} size={18} />
              {p}
            </button>
            {i < path.length - 1 && <Chevron />}
          </div>
        ))}
        <span className="flex-1" />
        <button aria-label="Path history" className="flex w-[18px] items-center justify-center bg-linear-to-b from-[#999] to-[#777]">
          <Tri dir="down" color="#eee" />
        </button>
      </nav>
      {children}
    </div>
  );
}

function ShelfTabs({ tabs }: { tabs: string[] }) {
  return (
    <div className="flex h-[19px] shrink-0 bg-[#bebebe]">
      <div className="flex shrink-0">
        {tabs.map((t, i) => (
          <button
            key={t}
            className={`shrink-0 border-r border-b text-[10px] leading-4 whitespace-nowrap ${i === 0 ? "border-r-[#888] border-b-white bg-white pr-[6px] pl-[9px]" : "border-[#888] bg-linear-to-b from-[#dedede] to-[#c6c6c6] pl-[9px]"} ${i > 0 && t !== "Drive Simu" ? "pr-[9px]" : ""}`}
          >
            {t}
          </button>
        ))}
      </div>
      <div className="flex flex-1 items-center justify-between gap-[3px] pr-[2px] pl-[2px]">
        <RoundButton kind="plus" />
        <RoundButton kind="menu" />
      </div>
    </div>
  );
}

const SHELF_BG = "bg-[linear-gradient(to_bottom,#fff,#e2e2e2_50%,#c9c9c9_52%,#dcdcdc)]";

function ShelfTools({ tools, pad }: { tools: [string, string][]; pad: string }) {
  return (
    <>
      {tools.map(([icon, name]) => (
        <button key={name} className={`flex min-w-[46px] shrink-0 flex-col items-center gap-[2px] pt-[2px] text-[10px] leading-3 whitespace-nowrap text-[#222] ${pad}`}>
          <Icon name={icon} size={24} />
          {name}
        </button>
      ))}
    </>
  );
}

function TitleBar({ title }: { title: string }) {
  return (
    <div className="flex h-[19px] shrink-0 items-center rounded-t-[4px] bg-linear-to-b from-[#dadada] to-[#c2c2c2] pr-[5px] pl-[3px]">
      <svg width="12" height="8" aria-hidden="true">
        <path d="M1 1l5 5 5-5" fill="none" stroke="#777" strokeWidth={3} />
      </svg>
      <span className="ml-[2px] h-full w-px bg-[#aaa]" />
      <span className="ml-[2px] flex-1 truncate font-['Liberation_Sans'] text-[11px] leading-4 text-[#666]">{title}</span>
      <div className="flex h-full items-center gap-[8px] border-l border-[#b0b0b0] pl-[5px]">
        <button aria-label="Minimize" className="mt-[5px] h-[4px] w-[10px] rounded-[1px] bg-[#858585]" />
        <button aria-label="Restore" className="h-[10px] w-[10px] border border-t-[3px] border-[#858585]" />
        <button aria-label="Close">
          <svg width="11" height="11" className="block">
            <path d="M2 2l7 7M9 2l-7 7" stroke="#777" strokeWidth={3.2} />
          </svg>
        </button>
      </div>
    </div>
  );
}

function MenuBar() {
  return (
    <div className="flex h-[25px] shrink-0 border-b border-black bg-linear-to-b from-white to-[#dadada]">
      <Gutter />
      <div className="flex flex-1 items-center gap-[11px] pt-[4px] pl-[6px] text-[11px]">
        {["File", "Edit", "Render", "Windows", "Help"].map((m) => (
          <button key={m}>{m}</button>
        ))}
      </div>
      <label className="flex items-center gap-[7px] pt-[2px] pr-[16px] text-[11px]">
        <input type="checkbox" className="size-[13px] appearance-none border border-[#444] bg-white" />
        Auto Takes
      </label>
      <Select label="Take" value="Main" options={["Main"]} className="w-[129px] border-l border-[#888] [&>select]:pt-[2px]" />
      <div className="flex w-[33px] items-center justify-center">
        <HelpButton size={16} />
      </div>
    </div>
  );
}

const MODEL_TOOLS: [string, string][] = [
  ["box", "Box"],
  ["sphere", "Sphere"],
  ["tube", "Tube"],
  ["torus", "Torus"],
  ["grid", "Grid"],
  ["metaball", "Metaball"],
  ["lsystem", "LSystem"],
  ["platonic", "Platonic ..."],
  ["curve", "Curve"],
  ["circle", "Circle"],
  ["font", "Font"],
  ["null", "Null"],
];

const LIGHT_TOOLS: [string, string][] = [
  ["pointLight", "Point Light"],
  ["spotLight", "Spot Light"],
  ["areaLight", "Area Light"],
  ["distantLight", "Distant Li..."],
  ["environment", "Environm..."],
  ["ambient", "Ambient L..."],
  ["camera", "Camera"],
  ["switcher", "Switcher"],
];

function Shelves() {
  return (
    <div className="flex h-[64px] shrink-0 border-b border-black">
      <Gutter />
      <div className="flex min-w-0 flex-1 flex-col pt-px">
        <ShelfTabs tabs={["Create", "Modify", "Model", "Polygon", "Deform", "Texture", "Character"]} />
        <div className={`flex flex-1 ${SHELF_BG}`}>
          <button aria-label="Scroll left" className="flex w-[17px] items-center justify-center bg-[#c8c8c8]">
            <svg width="9" height="8" aria-hidden="true">
              <path d="M8 1v6L1 4z" fill="#999" stroke="#555" />
            </svg>
          </button>
          <ShelfTools tools={MODEL_TOOLS} pad="px-[5px]" />
          <span className="flex-1" />
          <button aria-label="Scroll right" className="flex w-[17px] items-center justify-center bg-[#c8c8c8]">
            <svg width="9" height="8" aria-hidden="true">
              <path d="M1 0v8l7-4z" fill="#eee" stroke="#333" />
            </svg>
          </button>
        </div>
      </div>
      <div className="flex w-[10px] shrink-0 items-center justify-center border-r border-black bg-[#dadada]">
        <Grip cols={2} rows={5} />
      </div>
      <div className="flex min-w-0 flex-1 flex-col pt-px">
        <ShelfTabs tabs={["Lights And Cameras", "Create Particles", "Drive Particles", "Rigid Bodies", "Fluids", "Cloth", "Wires", "Drive Simu"]} />
        <div className={`flex flex-1 pl-[2px] ${SHELF_BG}`}>
          <ShelfTools tools={LIGHT_TOOLS} pad="px-[4px]" />
        </div>
      </div>
    </div>
  );
}

function ToolButton({ name, size = 24, active = false, className = "h-8" }: { name: string; size?: number; active?: boolean; className?: string }) {
  return (
    <button
      aria-label={name}
      className={`flex w-full shrink-0 items-center justify-center ${className} ${active ? "border border-[#555] bg-linear-to-b from-[#7a7a7a] to-[#a5a5a5]" : ""}`}
    >
      <Icon name={name} size={size} />
    </button>
  );
}

function LeftTools() {
  return (
    <div className="flex w-[34px] shrink-0 flex-col border-r border-black bg-linear-to-r from-[#e4e4e4] to-[#cecece]">
      <Collapser left />
      <div className="mx-[4px] mt-[6px] flex flex-col divide-y divide-[#777] rounded-[3px] border-2 border-[#777] bg-[#ececec]">
        <ToolButton name="shapes" size={18} className="h-[24px]" />
        <button aria-label="Components" className="flex h-[24px] items-center justify-center bg-[#8c8c8c]">
          <Icon name="diamonds" size={18} />
        </button>
        <ToolButton name="particles" size={18} className="h-[24px]" />
        <ToolButton name="solid" size={18} className="h-[24px]" />
      </div>
      <div className="mt-[4px] border-t border-[#777] pt-[4px]">
        {["arrow", "move", "rotate", "scale", "handle"].map((n) => (
          <ToolButton key={n} name={n} />
        ))}
      </div>
      <div className="mt-[4px] border-t border-[#777] pt-[4px]">
        {["snapGrid", "snapCurve", "snapPoint", "snap"].map((n) => (
          <ToolButton key={n} name={n} />
        ))}
      </div>
      <div className="mt-[3px] border-t border-[#777] pt-[4px]">
        <ToolButton name="camera" active />
        <ToolButton name="renderRegion" />
      </div>
      <span className="flex-1" />
      <ToolButton name="book" />
      <ToolButton name="reel" className="h-[36px]" />
    </div>
  );
}

function TextTool({ name, text }: { name: string; text: string }) {
  return (
    <button aria-label={name} className="relative flex h-[25px] w-full shrink-0 items-center justify-center">
      <Icon name={name} size={16} />
      <span className={`absolute right-[2px] text-[9px] leading-[10px] text-[#2f62a8] ${text === "abc" ? "bottom-0" : "top-[2px] font-bold"}`}>{text}</span>
    </button>
  );
}

function RightTools() {
  const h = "h-[25px]";
  return (
    <div className="flex w-[25px] shrink-0 flex-col border-x border-black bg-linear-to-r from-[#e4e4e4] to-[#d0d0d0]">
      <Collapser />
      <div className="border-b border-[#777] pt-[3px] pb-[4px]">
        <ToolButton name="plane" size={16} className={h} />
        <ToolButton name="cameraLock" size={16} className={h} />
        <ToolButton name="headlight" size={16} className={h} />
      </div>
      <div className="border-b border-[#777] pt-[5px] pb-[5px]">
        <ToolButton name="point" size={16} className={h} />
        <ToolButton name="normals" size={16} className={h} />
        <TextTool name="pointNumbers" text="12" />
        <ToolButton name="primNormal" size={16} className={h} />
        <TextTool name="primNumbers" text="12" />
        <ToolButton name="hull" size={16} className={h} />
        <ToolButton name="expand" size={16} className={h} />
        <ToolButton name="axes" size={16} className={h} />
        <TextTool name="labels" text="abc" />
        <ToolButton name="comment" size={16} className={h} />
        <ToolButton name="image" size={16} className={h} />
      </div>
      <div className="pt-[6px]">
        <ToolButton name="quad" size={14} active className={h} />
      </div>
      <span className="flex-1" />
      <ToolButton name="brain" size={18} className="h-[28px]" />
    </div>
  );
}

/* Channel editor */

const FRAME_PX = 2.15;
const frameX = (f: number) => 49.5 + (f - 1) * FRAME_PX;
const valueY = (v: number) => 495.5 - v * 14.33;
const impulse = (f: number) => Math.max(0, Math.pow(Math.sin((f * 5 * Math.PI) / 180), 11) * 30);

const curvePoints = Array.from({ length: 252 }, (_, i) => i + 1)
  .filter((f) => f !== 90)
  .map((f) => `${frameX(f)},${valueY(f === 234 ? 29.1 : impulse(f))}`)
  .join(" ");

const MAJOR = [25, 49, 73, 97, 121, 145, 169, 193, 217, 241];
const MINOR = Array.from({ length: 42 }, (_, i) => 1 + i * 6);

function ChannelRuler() {
  return (
    <svg className="block h-[26px] w-full" viewBox="0 0 592 26" preserveAspectRatio="xMinYMin slice">
      <rect width="592" height="26" fill="#c0c0c0" />
      <rect width="50" height="26" fill="#cdcdcd" />
      <path d="M50.500 0v26" stroke="#888" />
      <path d="M50 12.500h542" stroke="#aaa" />
      {MINOR.map((f) => (
        <path key={f} d={`M${Math.floor(frameX(f)) + 0.5} 9v7`} stroke="#888" />
      ))}
      {MAJOR.map((f) => (
        <g key={f}>
          <path d={`M${Math.floor(frameX(f)) + 0.5} 7v12`} stroke="#333" />
          <text x={frameX(f) + 2} y="10" fontSize="10" fill="#444">
            {f}
          </text>
        </g>
      ))}
      <path d="M60 19h12l-6 6z" fill="#222" stroke="#eee" />
      <rect x="54.5" y="1.5" width="23" height="17" fill="#111" stroke="#fff" />
      <text x="66" y="14" fontSize="12" fill="#fff" textAnchor="middle">
        8
      </text>
    </svg>
  );
}

function ChannelGraph() {
  return (
    <svg className="block min-h-0 w-full flex-1 bg-black" viewBox="0 0 592 560" preserveAspectRatio="xMinYMin slice">
      <g stroke="#333">
        {MAJOR.map((f) => (
          <path key={f} d={`M${Math.floor(frameX(f)) + 0.5} 0v560`} />
        ))}
        <path d="M50 208.500h542" />
      </g>
      <path d="M49.500 0v560" stroke="#777" strokeDasharray="8 8" />
      <path d="M50 495.500h542" stroke="#777" strokeDasharray="8 8" />
      <path d="M65.500 0v560" stroke="#fff" />
      <polyline points={curvePoints} fill="none" stroke="#cc2f66" strokeDasharray="2 2" />
      <path d="M49.500 471v50" stroke="#b0245a" />
      <g fontSize="11" fill="#fff">
        <text x="36" y="213">20</text>
        <text x="43" y="499">0</text>
      </g>
      <g fontSize="12" fontFamily="'Liberation Mono', monospace">
        <text x="54" y="15" fill="#eee">impulserate</text>
        <text x="319" y="491" fill="#c0356a">impulserate</text>
      </g>
    </svg>
  );
}

function HBar({ wide = false, className = "" }: { wide?: boolean; className?: string }) {
  return (
    <div className={`flex h-[15px] shrink-0 ${className}`}>
      <div className={`flex items-center justify-center bg-linear-to-b from-white to-[#d8d8d8] ${wide ? "flex-1" : "w-[28px]"}`}>
        <Grip cols={4} rows={3} />
      </div>
      {!wide && <div className="flex-1 bg-[#a2a2a2]" />}
      {(["left", "right"] as const).map((dir) => (
        <button key={dir} aria-label={`Scroll ${dir}`} className="flex w-[18px] items-center justify-center border-l border-[#999] bg-[#ececec]">
          <Tri dir={dir} />
        </button>
      ))}
    </div>
  );
}

function VBar() {
  return (
    <div className="flex w-[14px] shrink-0 flex-col border-r border-[#444] bg-linear-to-r from-white to-[#dcdcdc]">
      <div className="flex flex-1 items-center justify-center">
        <Grip cols={3} rows={4} />
      </div>
      {(["up", "down"] as const).map((dir) => (
        <button key={dir} aria-label={`Scroll ${dir}`} className="flex h-[18px] items-center justify-center border-t border-[#777]">
          <Tri dir={dir} />
        </button>
      ))}
    </div>
  );
}

function ChannelList() {
  return (
    <div className="flex w-[101px] shrink-0 flex-col bg-[#d2d2d2]">
      <div className="flex h-[306px] shrink-0">
        <div className="mr-[2px] min-w-0 flex-1 bg-[repeating-linear-gradient(to_bottom,#f0f0f0_0_18px,#fff_18px_36px)]">
          <div className="flex h-[18px] items-center bg-white">
            <span className="mb-[7px] ml-[9px] h-[10px] w-[8px] border-b border-l border-[#999]" />
            <Icon name="pin" size={15} />
            <svg width="6" height="14" className="ml-[9px]" aria-hidden="true">
              <path d="M3 3v8" stroke="#111" strokeWidth={1.5} />
              <circle cx="3" cy="3" r="2.5" />
              <circle cx="3" cy="11" r="2.5" />
            </svg>
            <span className="ml-[6px] h-[18px] flex-1 overflow-hidden border-b border-l border-[#f0a030] pl-[3px] text-[11px] leading-[18px] whitespace-nowrap">All C</span>
          </div>
        </div>
        <VBar />
      </div>
      <HBar className="mt-px mr-[14px]" />
      <div className="mr-[14px] flex h-[22px] shrink-0 items-center text-[11px] text-[#333]">
        <label htmlFor="filter">Filter:</label>
        <input id="filter" className="ml-[3px] h-[20px] min-w-0 flex-1 border border-[#999] bg-white" />
        <button aria-label="Filter history" className="flex h-[20px] w-[17px] items-center justify-center bg-[#8b8b8b]">
          <Tri dir="down" color="#eee" />
        </button>
      </div>
      <div className="flex h-[6px] shrink-0 items-center justify-center border-y border-black bg-[#eee]">
        <Grip cols={6} rows={1} />
      </div>
      <div className="flex min-h-0 flex-1">
        <div className="mr-[2px] flex min-w-0 flex-1 flex-col">
          <div className="h-[16px] border border-[#333] bg-[#a8a8a8] text-center text-[11px] leading-[14px]">Othe...eters</div>
          <div className="h-[15px] pl-[3px] text-[11px] leading-[15px] text-[#333]">/obj/...urce1</div>
          <table className="w-full table-fixed text-[11px] leading-[13px]">
            <tbody>
              <tr>
                <td className="w-[15px] bg-[#d2d2d2]">
                  <Icon name="pin" size={13} />
                </td>
                <td className="w-[34px] border border-[#d2d2d2] bg-[#800080] text-center text-white">Im...</td>
                <td className="border border-[#888] bg-[#d6ffff] pl-[2px] font-['DejaVu_Sans_Mono'] font-bold">max(</td>
              </tr>
            </tbody>
          </table>
          <div className="grid flex-1 grid-cols-[15px_34px_1fr] divide-x divide-[#d8d8d8] bg-[repeating-linear-gradient(to_bottom,#f0f0f0_0_15px,#fff_15px_30px)]">
            <span />
            <span />
            <span />
          </div>
        </div>
        <VBar />
      </div>
      <HBar wide className="mr-[14px]" />
    </div>
  );
}

const KEY_FUNCS = [
  "M4 17h14V5",
  "M4 18L19 5",
  "M4 18c6 0 6-11 15-13",
  "M4 18c8 0 5-12 15-13",
  "M4 18c9 0 13-5 15-13",
  "M4 18c1-8 6-12 15-13",
  "M3 18c4-2 6-3 8-6s5-5 9-7M5 14l12-6",
  "M3 16c3-9 6-9 9-8s5 2 8 7",
  "M3 9c2 3 4 7 7 6s5-4 10-8",
];

function KeyIcon({ d, color = "#7c8a9c", dots = true }: { d: string; color?: string; dots?: boolean }) {
  return (
    <button aria-label="Segment function" className="flex h-[20px] items-center justify-center">
      <svg width="15" height="15" viewBox="0 0 24 24" aria-hidden="true">
        <path d={d} fill="none" stroke={color} strokeWidth={1.8} />
        {dots && <path d="M2 16h4v4H2zM17 4h4v4h-4z" fill="#888" />}
      </svg>
    </button>
  );
}

function ChannelTools() {
  return (
    <div className="flex w-[21px] shrink-0 flex-col border-l border-black bg-linear-to-r from-[#e4e4e4] to-[#cdcdcd]">
      <Collapser />
      <div className="flex flex-col border-b border-[#777] pt-[1px] pb-[2px]">
        <KeyIcon d="M3 21c5-1 7-4 9-9s3-8 9-10" dots={false} />
        <KeyIcon d="M3 5c5-1 6 4 2 9M12 18c0-5 3-8 8-9M9 20L20 3" dots={false} />
      </div>
      <div className="flex flex-col border-b border-[#777] pt-[2px] pb-[4px]">
        <KeyIcon d="M2 17c6 1 3-6 8-4s4-6 12-7M7 5v13" color="#c77f86" dots={false} />
        <KeyIcon d="M3 8l3-3M18 5l3 3M3 12c5 0 7 4 9 8 2-4 4-8 9-8" color="#c77f86" dots={false} />
      </div>
      <div className="flex flex-col pt-[2px]">
        {KEY_FUNCS.map((d) => (
          <KeyIcon key={d} d={d} />
        ))}
        <KeyIcon d="M4 18h7L12 6h8" color="#c0656d" />
        <KeyIcon d="M3 5c5 0 6 12 11 13h6M5 18L19 5" color="#c0656d" />
        <KeyIcon d="M3 19C4 4 7 4 10 11s6 9 9-7" dots={false} />
        <KeyIcon d="M8 16V8h8v8zM15 15l3 4" color="#555" />
      </div>
    </div>
  );
}

function FrameField({ label, value, id }: { label: string; value: string; id: string }) {
  return (
    <>
      <label htmlFor={id} className="text-[11px] whitespace-nowrap text-[#26264a]">
        {label}
      </label>
      <input id={id} defaultValue={value} className="mr-[5px] ml-[4px] h-[21px] w-[56px] border border-[#888] bg-white pl-[2px] text-[11px] text-black" />
    </>
  );
}

function StepIcon({ kind, small = false }: { kind: string; small?: boolean }) {
  return (
    <svg width={small ? 14 : 20} height={small ? 11 : 14} viewBox="0 0 18 14" aria-hidden="true">
      <g fill="#eee" stroke="#444">
        {kind === "first" && <path d="M1 2h2v10H1zM10 2v10L4 7zM17 2v10l-6-5z" />}
        {kind === "prev" && (
          <>
            <path d="M2 2h3v10H2z" fill="#8fd04f" stroke="#4f8a26" />
            <path d="M14 2v10L6 7z" />
          </>
        )}
        {kind === "reverse" && <path d="M14 1v12L3 7z" />}
        {kind === "stop" && <path d="M3 1h12v12H3z" />}
        {kind === "play" && <path d="M4 1v12l11-6z" />}
        {kind === "next" && (
          <>
            <path d="M13 2h3v10h-3z" fill="#8fd04f" stroke="#4f8a26" />
            <path d="M4 2v10l8-5z" />
          </>
        )}
      </g>
    </svg>
  );
}

const GHOST_FIELDS = ["Frame", "Value", "Slope", "Accel."];

function ChannelWindow() {
  return (
    <div className="absolute top-[6px] right-[27px] bottom-[2px] left-[35px] flex flex-col rounded-t-[5px] bg-black p-px">
      <TitleBar title="Channel Editor - FloatingChannelEditor" />
      <div className="flex min-h-0 flex-1 flex-col bg-[#dcdcdc] px-[3px] pb-[7px]">
        <div className="flex min-h-0 flex-1 flex-col border-x border-b border-black">
          <div className="flex h-[26px] shrink-0 items-center gap-[12px] bg-linear-to-b from-white to-[#dadada] pt-[3px] pl-[5px] text-[11px]">
            {["Channels", "Edit", "View", "Time Group", "Settings"].map((m) => (
              <button key={m}>{m}</button>
            ))}
          </div>
          <div className="flex h-[30px] shrink-0 items-center bg-[#7777bf] pr-[4px] pl-[3px]">
            <div className="flex h-[22px] w-[62px] divide-x divide-[#888] border border-[#333] bg-[#efefef]">
              <button aria-label="Graph view" className="flex flex-1 items-center justify-center bg-[#888]">
                <Icon name="graphView" size={13} />
              </button>
              <button aria-label="Table view" className="relative flex flex-1 items-center justify-center">
                <Icon name="dopesheet" size={16} />
                <span className="absolute text-[9px] leading-3">23</span>
              </button>
              <button aria-label="Dope sheet" className="flex flex-1 items-center justify-center">
                <Icon name="bars" size={15} />
              </button>
            </div>
            <Select label="Scope" value="All Scoped Channels" options={["All Scoped Channels"]} className="ml-[9px] h-[20px] w-[173px] shadow-[1px_1px_1px_#333]" />
            <button disabled className="ml-[10px] flex h-[20px] w-[94px] items-center justify-between bg-[#7272b8] pl-[10px] text-[11px] text-[#6565a5]">
              3 Graphs
              <span className="flex h-full w-5 items-center justify-center bg-[#6c6cad] opacity-60">
                <Spinner />
              </span>
            </button>
            <span className="flex-1" />
            <FrameField id="start-frame" label="Start Frame" value="1" />
            <FrameField id="end-frame" label="End Frame" value="252" />
            <div className="ml-[5px] flex h-[22px] w-[42px] divide-x divide-[#888] border border-[#333] bg-linear-to-b from-white to-[#ddd]">
              <button aria-label="Previous key" className="flex flex-1 items-center justify-center">
                <StepIcon kind="prev" small />
              </button>
              <button aria-label="Next key" className="flex flex-1 items-center justify-center">
                <StepIcon kind="next" small />
              </button>
            </div>
            <div className="ml-[3px] flex size-[22px] items-center justify-center border border-[#333] bg-[#ddd]">
              <HelpButton size={18} />
            </div>
          </div>
          <div className="flex min-h-0 flex-1">
            <ChannelList />
            <div className="flex w-[5px] shrink-0 items-center justify-center border-r border-black bg-[#d8d8d8]">
              <Grip cols={1} rows={6} />
            </div>
            <div className="flex min-w-0 flex-1 flex-col">
              <div className="flex min-h-0 flex-1">
                <div className="flex min-w-0 flex-1 flex-col">
                  <div className="flex h-[9px] shrink-0 border-b border-[#555] bg-[#cdcdcd] pl-[50px]">
                    <div className="flex flex-1 items-center justify-between bg-linear-to-b from-white to-[#d6d6d6] px-[7px]">
                      <Grip cols={3} rows={1} />
                      <Grip cols={4} rows={1} />
                      <Grip cols={3} rows={1} />
                    </div>
                  </div>
                  <ChannelRuler />
                  <ChannelGraph />
                  <svg className="block h-[16px] w-full border-b border-black bg-[#3131b3]" viewBox="0 0 592 15" preserveAspectRatio="xMinYMin slice">
                    {[1, ...MAJOR].map((f) => (
                      <text key={f} x={frameX(f)} y="11" fontSize="11" fill="#fff" textAnchor="middle">
                        {f}
                      </text>
                    ))}
                  </svg>
                </div>
                <ChannelTools />
              </div>
              <div className="flex h-[32px] shrink-0 items-center border-t border-[#555] bg-[#d9d9d9] pr-[5px] text-[11px]">
                <div className="flex h-full">
                  <Gutter down />
                </div>
                <span className="mr-[8px] ml-[9px]">
                  <Icon name="editKey" size={14} />
                </span>
                {GHOST_FIELDS.map((f) => (
                  <label key={f} className="flex items-center gap-[3px] pr-[4px] text-[#8a8a8a]">
                    {f}
                    <input disabled defaultValue="---" className="h-[21px] w-[56px] border border-[#c4c4c4] bg-[#dedede] pl-[3px] font-['DejaVu_Sans_Mono'] text-[#aaa]" />
                  </label>
                ))}
                <label htmlFor="segment-fn" className="pr-[3px]">
                  Function
                </label>
                <input id="segment-fn" className="h-[21px] min-w-0 flex-1 border border-[#c4c4c4] bg-[#e4e4e4]" />
                <button aria-label="Choose function" className="flex h-[21px] w-[17px] items-center justify-center bg-[#858585]">
                  <Tri dir="down" color="#eee" />
                </button>
              </div>
            </div>
          </div>
        </div>
      </div>
    </div>
  );
}

function ScenePane() {
  return (
    <section className="flex min-h-0 min-w-0 flex-col">
      <PaneTabs tabs={[{ name: "Scene View" }, { name: "Channel Editor" }, { name: "Render View" }, { name: "Composite View" }]} />
      <PathBar path={["obj", "geo1"]}>
        <button aria-label="Pin network" className="ml-[5px] flex size-[24px] items-center justify-center border border-[#555] bg-[#9a9a9a]">
          <Icon name="pinYellow" size={17} />
        </button>
        <button aria-label="Link pane" className="mr-[17px] ml-[3px]">
          <Icon name="rings" size={18} />
        </button>
        <div className="flex gap-[8px]">
          <Icon name="cube" size={24} />
          <Icon name="display" size={24} />
          <Icon name="square" size={24} />
        </div>
      </PathBar>
      <div className="relative flex min-h-0 flex-1 flex-col bg-[#555]">
        <div className="flex h-[33px] shrink-0 items-center border-b border-black bg-[#d8d8d8] pr-[6px]">
          <div className="flex h-full">
            <Gutter />
          </div>
          <span className="ml-[6px] flex-1">
            <Icon name="camera" size={20} />
          </span>
          <HelpButton size={21} />
        </div>
        <div className="flex min-h-0 flex-1 justify-between">
          <LeftTools />
          <RightTools />
        </div>
        <ChannelWindow />
      </div>
    </section>
  );
}

/* Parameter pane */

function ParamLabel({ id, name, marked = false }: { id: string; name: string; marked?: boolean }) {
  return (
    <label htmlFor={id} className={`mr-[9px] w-[128px] shrink-0 pr-[5px] text-right text-[11px] leading-[18px] text-[#222] ${marked ? "bg-[#b9b9b9]" : ""}`}>
      {name}
    </label>
  );
}

const FIELD = "h-[22px] min-w-0 border border-[#888] pl-[2px] text-[12px] text-black";

function TextParam({ id, name, value, marked, bold, cyan }: { id: string; name: string; value: string; marked?: boolean; bold?: boolean; cyan?: boolean }) {
  return (
    <div className="flex h-[22px] items-center">
      <ParamLabel id={id} name={name} marked={marked} />
      <input
        id={id}
        defaultValue={value}
        className={`${FIELD} flex-1 ${bold ? "font-['DejaVu_Sans_Mono'] font-bold" : ""} ${cyan ? "bg-[#d2ffff]" : "bg-white"}`}
      />
    </div>
  );
}

function SliderParam({ id, name, value, bold, full }: { id: string; name: string; value: string; bold?: boolean; full?: boolean }) {
  return (
    <div className="flex h-[22px] items-center">
      <ParamLabel id={id} name={name} />
      <input id={id} defaultValue={value} className={`${FIELD} w-[77px] bg-white ${bold ? "font-['DejaVu_Sans_Mono'] font-bold" : ""}`} />
      <input
        type="range"
        aria-label={`${name} slider`}
        defaultValue={full ? 100 : 0}
        className={`ml-[3px] h-[20px] min-w-0 flex-1 appearance-none bg-transparent [&::-webkit-slider-runnable-track]:h-[3px] [&::-webkit-slider-thumb]:-mt-[9px] [&::-webkit-slider-thumb]:h-[20px] [&::-webkit-slider-thumb]:w-[6px] [&::-webkit-slider-thumb]:appearance-none [&::-webkit-slider-thumb]:border [&::-webkit-slider-thumb]:border-[#666] [&::-webkit-slider-thumb]:bg-[#e8e8e8] ${full ? "[&::-webkit-slider-runnable-track]:bg-[linear-gradient(#888_1px,#000_1px)]" : "[&::-webkit-slider-runnable-track]:bg-[linear-gradient(#999_1px,#555_1px_2px,#aaa_2px)]"}`}
      />
    </div>
  );
}

function CheckParam({ name }: { name: string }) {
  return (
    <label className="ml-[139px] flex h-[18px] items-center gap-[7px] text-[11px] text-[#222]">
      <input type="checkbox" className="size-[13px] appearance-none border border-[#444] bg-white" />
      {name}
    </label>
  );
}

function ParamPane() {
  return (
    <section className="flex shrink-0 flex-col border-l border-black">
      <PaneTabs tabs={[{ name: "source1", italic: true }, { name: "Take List" }]} />
      <PathBar path={["obj", "geo1", "popnet"]} forward={false}>
        <button aria-label="Pin pane" className="ml-[8px]">
          <Icon name="pin" size={18} />
        </button>
        <button aria-label="Link pane" className="ml-[6px]">
          <Icon name="rings" size={18} />
        </button>
      </PathBar>
      <div className="bg-[#d0d0d0] pb-[16px]">
        <div className="mx-[3px] flex h-[35px] items-center border-b border-[#333] pt-px pl-[3px]">
          <Icon name="source" size={24} />
          <label htmlFor="node-name" className="ml-[5px] text-[11px] font-bold text-[#222]">
            Source
          </label>
          <input id="node-name" defaultValue="source1" className={`${FIELD} mr-[4px] ml-[6px] flex-1 bg-white font-['DejaVu_Sans_Mono']`} />
          <div className="flex items-center gap-[10px] pr-[4px]">
            <Icon name="gear" size={24} />
            <Icon name="hda" size={22} />
            <HelpButton size={22} glyph="i" label="Node info" />
            <HelpButton size={22} />
          </div>
        </div>
        <div className="mx-[2px] mt-[4px] flex h-[19px] text-[11px]">
          {["Source", "Birth", "Attributes", "Add Attributes"].map((t, i) => (
            <button
              key={t}
              className={`border-t border-r border-[#888] leading-4 ${i === 1 ? "bg-[#d4d4d4] px-[10px]" : "border-b border-l bg-linear-to-b from-[#dadada] to-[#b0b0b0] px-[9px]"}`}
            >
              {t}
            </button>
          ))}
        </div>
        <div className="mx-[2px] flex flex-col gap-[2px] rounded-[2px] border border-[#999] border-t-white pt-[4px] pr-[5px] pb-[5px] pl-[5px]">
          <TextParam id="impulse-activation" name="Impulse Activation" value="1" marked />
          <TextParam id="impulse-rate" name="Impulse Birth Rate" value="max(0,(sin($FF*5)^11)*30)" marked bold cyan />
          <SliderParam id="const-activation" name="Const. Activation" value="0" bold />
          <SliderParam id="const-rate" name="Const. Birth Rate" value="100" full />
          <div className="flex h-[22px] items-center">
            <ParamLabel id="probability" name="Birth Probability" />
            <input id="probability" defaultValue="1" className={`${FIELD} mr-[2px] flex-1 bg-white`} />
            <input aria-label="Birth Probability maximum" defaultValue="1" className={`${FIELD} flex-1 bg-white`} />
          </div>
          <TextParam id="birth-group" name="Birth Group" value="justborn" bold />
          <CheckParam name="Preserve Group" />
          <SliderParam id="life" name="Life Expectancy" value="100" full />
          <SliderParam id="variance" name="Life Variance" value="0" />
          <CheckParam name="Accurate Births" />
        </div>
      </div>
    </section>
  );
}

/* Network pane */

const NODES = [
  { name: "source1", icon: "nodeSource", top: "top-[47px]", selected: true },
  { name: "color1", icon: "nodeColor", top: "top-[123px]" },
  { name: "force1", icon: "nodeForce", top: "top-[199px]" },
  { name: "collision1", icon: "nodeCollision", top: "top-[275px]", display: true },
];

function NetworkNode({ node, last }: { node: (typeof NODES)[number]; last: boolean }) {
  return (
    <div className={`absolute left-[263px] ${node.top}`}>
      <div className="flex items-center gap-px">
        <svg width="84" height="38" viewBox="-2 -2 84 38" className="block overflow-visible" aria-hidden="true">
          {!last && <path d="M39.500 32v46" stroke={node.selected ? "#1c5a2a" : "#888"} strokeWidth={node.selected ? 1.5 : 1} />}
          {node.selected && (
            <path d="M31 1h17v5h32v21H48v5H31v-5H0V6h31z" fill="#f5d90a" stroke="#f5d90a" strokeWidth={4} strokeLinejoin="round" />
          )}
          <path d="M31.500 1.500h16v31h-16z" fill="#888" stroke="#222" />
          <path d="M38 4h3M38 30h3" stroke="#fff" />
          <rect x="0.5" y="6.5" width="79" height="20" fill="#e2e2e2" stroke="#333" />
          <path d="M0 26.500h80" stroke="#000" strokeWidth={1.5} />
          <path d="M10.500 7v19M20.500 7v19M69.500 7v19" stroke="#b0b0b0" />
          <path d="M11.500 7v19M21.500 7v19M70.500 7v19" stroke="#fff" />
          {node.display && <rect x="70" y="7" width="9" height="19" fill="#0a66d0" />}
          <g transform="translate(37 8) scale(.68)">{ICONS[node.icon]}</g>
        </svg>
        <span className="text-[11px] leading-4">{node.name}</span>
      </div>
    </div>
  );
}

function NetworkPane() {
  return (
    <section className="flex min-h-0 flex-1 flex-col border-l border-black">
      <PaneTabs tabs={[{ name: "/obj/geo1/popnet", italic: true }, { name: "Tree View" }, { name: "Material Palette" }]} />
      <PathBar path={["obj", "geo1", "popnet"]}>
        <button aria-label="Pin pane" className="ml-[8px]">
          <Icon name="pin" size={18} />
        </button>
        <button aria-label="Link pane" className="mr-[16px] ml-[6px]">
          <Icon name="rings" size={18} />
        </button>
        <button aria-label="Search network">
          <Icon name="search" size={17} />
        </button>
      </PathBar>
      <div className="relative flex-1 bg-[#b1b1b1]">
        <h2 className="pt-[5px] pr-[6px] text-right font-['Open_Sans'] text-[17px] font-bold text-[#888]">Particles</h2>
        {NODES.map((n, i) => (
          <NetworkNode key={n.name} node={n} last={i === NODES.length - 1} />
        ))}
      </div>
    </section>
  );
}

/* Playbar */

const PLAY_MAJOR = [24, 48, 72, 96, 120, 144, 168, 192, 216];
const playX = (f: number) => Math.round((f - 1) * 3.02) - 0.5;

function Timeline() {
  return (
    <div className="flex h-[40px] min-w-0 flex-1 flex-col border border-[#777]">
      <svg className="block min-h-0 w-full flex-1 bg-[#c6c6c6]" viewBox="0 0 724 30" preserveAspectRatio="xMinYMin slice">
        <path d="M0 15.500h724" stroke="#999" />
        {Array.from({ length: 40 }, (_, i) => (i + 1) * 6).map((f) => (
          <path key={f} d={`M${playX(f)} 12v7`} stroke="#888" />
        ))}
        {PLAY_MAJOR.map((f) => (
          <g key={f}>
            <path d={`M${playX(f)} 11v9`} stroke="#222" />
            <text x={playX(f) + 1} y="9" fontSize="10" fill="#555">
              {f}
            </text>
          </g>
        ))}
        <text x="3" y="9" fontSize="10" fill="#777">1</text>
        <path d="M2 10v5" stroke="#777" strokeWidth={3} />
        <path d="M2 15v13" stroke="#5c8f1e" strokeWidth={3} />
        <path d="M722 11v9" stroke="#555" strokeWidth={3} />
        <path d="M20.500 18v12" stroke="#333" strokeWidth={3} />
        <rect x="11.5" y="0.5" width="18" height="18" fill="#111" stroke="#fff" />
        <text x="20.5" y="14" fontSize="12" fill="#fff" textAnchor="middle">8</text>
      </svg>
      <div className="flex h-[8px] shrink-0 items-center justify-between bg-linear-to-b from-white to-[#cfcfcf] px-[6px]">
        <Grip cols={3} rows={1} />
        <Grip cols={4} rows={1} />
        <Grip cols={3} rows={1} />
      </div>
    </div>
  );
}

function PlayBar() {
  const frame = "h-[22px] border border-[#777] bg-white pl-[3px] text-[11px]";
  const group = "flex divide-x divide-[#888] rounded-[2px] border border-[#555] bg-linear-to-b from-white to-[#d8d8d8] shadow-[0_1px_0_#333]";
  return (
    <div className="flex h-[45px] shrink-0 border-t border-b border-t-white border-b-black bg-[#dedede]">
      <Gutter down />
      <div className="flex min-w-0 flex-1 items-center pr-[12px] pb-[3px] pl-[12px]">
        <div className={`${group} h-[26px] w-[163px]`}>
          {["first", "prev", "reverse", "stop", "play", "next"].map((k) => (
            <button key={k} aria-label={k} className={`flex flex-1 items-center justify-center ${k === "stop" ? "bg-[#999]" : ""}`}>
              <StepIcon kind={k} />
            </button>
          ))}
        </div>
        <input aria-label="Current frame" defaultValue="8" className={`${frame} ml-[9px] w-[51px]`} />
        <button className="h-[22px] w-[17px] border-y border-r border-[#777] bg-[#eee] text-[11px] font-bold">−</button>
        <button className="h-[22px] w-[17px] border-y border-r border-[#777] bg-[#eee] text-[11px] font-bold">+</button>
        <input aria-label="Range start" defaultValue="1" className={`${frame} mr-[6px] ml-[9px] w-[43px]`} />
        <Timeline />
        <input aria-label="Range end" defaultValue="240" className={`${frame} mr-[10px] ml-[5px] w-[43px]`} />
        <button aria-label="Set key" className={`${group} h-[22px] w-[23px] items-center justify-center`}>
          <Icon name="key" size={15} />
        </button>
        <div className={`${group} ml-[9px] h-[22px] w-[107px]`}>
          {["scrub", "clock", "loop", "speaker", "panel"].map((k) => (
            <button key={k} aria-label={k} className="flex flex-1 items-center justify-center">
              <Icon name={k} size={14} />
            </button>
          ))}
        </div>
      </div>
    </div>
  );
}

function StatusBar() {
  return (
    <div className="flex h-[24px] shrink-0 justify-end bg-[#d0d0d0]">
      <button aria-label="Cancel cook" className="flex w-[24px] items-center justify-center bg-[#dcdcdc]">
        <svg width="16" height="16" viewBox="0 0 16 16">
          <path d="M5 1h6l4 4v6l-4 4H5l-4-4V5z" fill="#e87878" stroke="#b55" />
          <path d="M5.500 5.500l5 5M10.500 5.500l-5 5" stroke="#fff" strokeWidth={2} />
        </svg>
      </button>
      <button aria-label="Recook" className="flex w-[24px] items-center justify-center border-x border-[#bbb] bg-[#dcdcdc]">
        <Icon name="refresh" size={16} />
      </button>
      <Select label="Update mode" value="Auto Update" options={["Auto Update", "On Mouse Up", "Manual"]} className="w-[130px]" />
      <button aria-label="Cache" className="flex w-[24px] items-center justify-center bg-[#ddd]">
        <Icon name="cache" size={18} />
      </button>
    </div>
  );
}

export default function App() {
  return (
    <main className="flex h-screen min-h-[700px] flex-col bg-black p-px font-['DejaVu_Sans',sans-serif] text-[11px] leading-4 text-[#111]">
      <Defs />
      <TitleBar title="/net/homedirs/dferreira/Desktop/shperepaint.hip - Houdini Master" />
      <div className="flex min-h-0 flex-1 flex-col bg-[#d8d8d8] px-[3px] pb-[7px]">
        <div className="flex min-h-0 flex-1 flex-col border border-black border-t-[#888]">
          <MenuBar />
          <Shelves />
          <div className="grid min-h-0 flex-1 grid-cols-[minmax(0,791fr)_8px_minmax(0,471fr)] bg-[#a0a0a0]">
            <ScenePane />
            <div className="flex flex-col items-center justify-center gap-[18px] border-l border-black">
              <Tri dir="left" />
              <Grip cols={2} rows={7} />
              <Tri dir="right" />
            </div>
            <div className="flex min-h-0 min-w-0 flex-col">
              <ParamPane />
              <div className="flex h-[7px] shrink-0 items-center justify-center gap-[17px]">
                <Tri dir="up" />
                <Grip cols={7} rows={2} />
                <Tri dir="down" />
              </div>
              <NetworkPane />
            </div>
          </div>
          <PlayBar />
          <StatusBar />
        </div>
      </div>
    </main>
  );
}
